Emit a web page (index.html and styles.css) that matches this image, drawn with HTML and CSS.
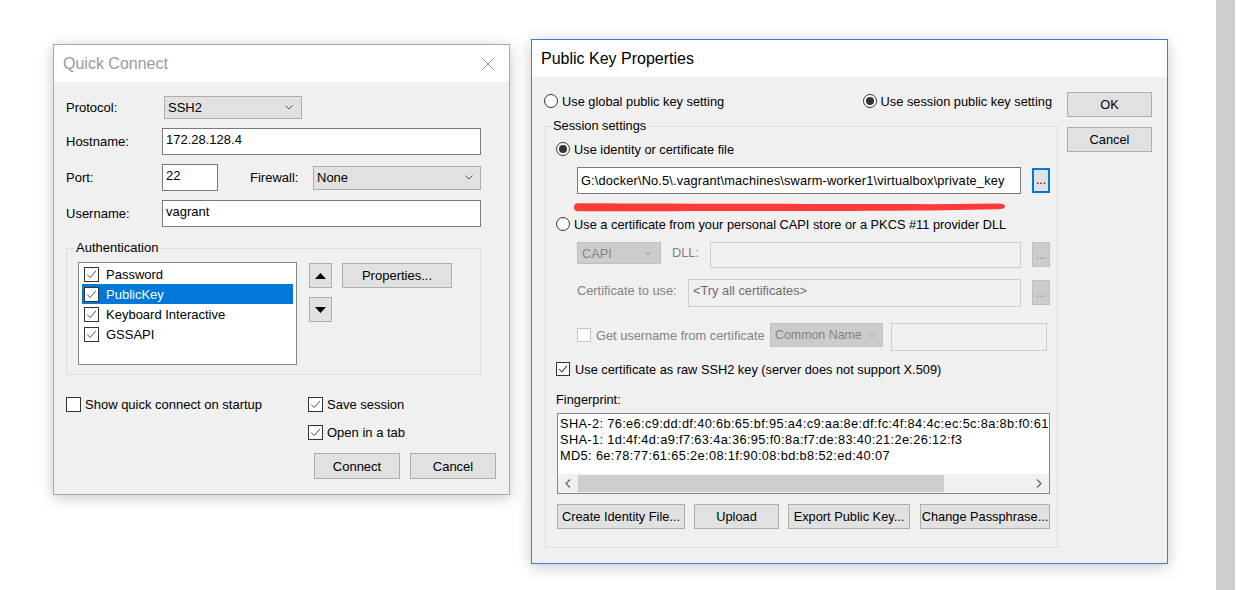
FILE: index.html
```html
<!DOCTYPE html>
<html>
<head>
<meta charset="utf-8">
<title>Quick Connect</title>
<link rel="stylesheet" href="styles.css">
</head>
<body>
<div class="page">
 <div class="desk">

  <div class="win qc">
   <div class="titlebar">
    <span class="title">Quick Connect</span>
    <svg class="close" width="12" height="12" viewBox="0 0 12 12"><path d="M0.5 0.5L11.5 11.5M11.5 0.5L0.5 11.5" stroke="#8c8c8c" stroke-width="1" fill="none"/></svg>
   </div>
   <div class="qc-body">
    <div class="row r-first">
     <span class="lbl">Protocol:</span>
     <div class="combo proto"><span class="ctext">SSH2</span><svg class="chev" width="8" height="5" viewBox="0 0 8 5"><path d="M0.5 0.5L4 4L7.5 0.5" stroke="#555" fill="none"/></svg></div>
    </div>
    <div class="row">
     <span class="lbl">Hostname:</span>
     <div class="edit host">172.28.128.4</div>
    </div>
    <div class="row">
     <span class="lbl">Port:</span>
     <div class="edit port">22</div>
     <span class="lbl-fw">Firewall:</span>
     <div class="combo fw"><span class="ctext">None</span><svg class="chev" width="8" height="5" viewBox="0 0 8 5"><path d="M0.5 0.5L4 4L7.5 0.5" stroke="#555" fill="none"/></svg></div>
    </div>
    <div class="row">
     <span class="lbl">Username:</span>
     <div class="edit host">vagrant</div>
    </div>

    <div class="group auth">
     <span class="legend">Authentication</span>
     <div class="auth-inner">
      <div class="listbox">
       <div class="item"><span class="cb on"><svg viewBox="0 0 15 15"><path d="M2.5 7.5L6 11L12.5 3.5" stroke="#444" stroke-width="1.1" fill="none"/></svg></span>Password</div>
       <div class="item sel"><span class="cb on"><svg viewBox="0 0 15 15"><path d="M2.5 7.5L6 11L12.5 3.5" stroke="#444" stroke-width="1.1" fill="none"/></svg></span>PublicKey</div>
       <div class="item"><span class="cb on"><svg viewBox="0 0 15 15"><path d="M2.5 7.5L6 11L12.5 3.5" stroke="#444" stroke-width="1.1" fill="none"/></svg></span>Keyboard Interactive</div>
       <div class="item"><span class="cb on"><svg viewBox="0 0 15 15"><path d="M2.5 7.5L6 11L12.5 3.5" stroke="#444" stroke-width="1.1" fill="none"/></svg></span>GSSAPI</div>
      </div>
      <div class="updown">
       <div class="btn arrow"><svg width="11" height="6" viewBox="0 0 11 6"><path d="M5.5 0L11 6H0Z" fill="#000"/></svg></div>
       <div class="btn arrow"><svg width="11" height="6" viewBox="0 0 11 6"><path d="M0 0H11L5.5 6Z" fill="#000"/></svg></div>
      </div>
      <div class="btn props">Properties...</div>
     </div>
    </div>

    <div class="qc-bottom">
     <div class="qc-left">
      <div class="cbrow"><span class="cb"></span><span class="cbtext">Show quick connect on startup</span></div>
     </div>
     <div class="qc-right">
      <div class="cbrow"><span class="cb on"><svg viewBox="0 0 15 15"><path d="M2.5 7.5L6 11L12.5 3.5" stroke="#444" stroke-width="1.1" fill="none"/></svg></span><span class="cbtext">Save session</span></div>
      <div class="cbrow second"><span class="cb on"><svg viewBox="0 0 15 15"><path d="M2.5 7.5L6 11L12.5 3.5" stroke="#444" stroke-width="1.1" fill="none"/></svg></span><span class="cbtext">Open in a tab</span></div>
      <div class="qc-buttons">
       <div class="btn qbtn">Connect</div>
       <div class="btn qbtn">Cancel</div>
      </div>
     </div>
    </div>
   </div>
  </div>

  <div class="win pkp">
   <div class="titlebar">
    <span class="title">Public Key Properties</span>
   </div>
   <div class="pkp-body">
    <div class="pkp-main">
     <div class="scope-row">
      <div class="opt"><span class="rb"></span><span>Use global public key setting</span></div>
      <div class="opt"><span class="rb on"></span><span>Use session public key setting</span></div>
     </div>

     <div class="group sess">
      <span class="legend">Session settings</span>

      <div class="opt"><span class="rb on"></span><span>Use identity or certificate file</span></div>

      <div class="indent file-row">
       <div class="edit path">G:\docker\No.5\.vagrant\machines\swarm-worker1\virtualbox\private_key</div>
       <div class="btn browse focus">...</div>
       <svg class="redline" width="434" height="10" viewBox="0 0 434 10"><path d="M4 1.2C120 1.6 260 2.2 356 2.2L424 1.4Q431 1.5 431 4.2Q431 7 424 7.2L356 8.4C260 9 120 9.2 4 9.2Q0 9 0 5.2Q0 1.3 4 1.2Z" fill="#fb3a3a"/></svg>
      </div>

      <div class="opt opt-capi"><span class="rb"></span><span>Use a certificate from your personal CAPI store or a PKCS #11 provider DLL</span></div>

      <div class="indent dll-row">
       <div class="combo dis capi"><span class="ctext">CAPI</span><svg class="chev" width="8" height="5" viewBox="0 0 8 5"><path d="M0.5 0.5L4 4L7.5 0.5" stroke="#9a9a9a" fill="none"/></svg></div>
       <span class="dlbl dll-lbl">DLL:</span>
       <div class="edit dis dll"></div>
       <div class="btn browse dis">...</div>
      </div>

      <div class="indent cert-row">
       <span class="dlbl cert-lbl">Certificate to use:</span>
       <div class="edit dis cert">&lt;Try all certificates&gt;</div>
       <div class="btn browse dis low">...</div>
      </div>

      <div class="indent user-row">
       <div class="user-chk"><span class="cb small dis"></span><span class="dlbl">Get username from certificate</span></div>
       <div class="combo dis cn"><span class="ctext cn-text">Common Name</span><svg class="chev" width="8" height="5" viewBox="0 0 8 5"><path d="M0.5 0.5L4 4L7.5 0.5" stroke="#9a9a9a" fill="none"/></svg></div>
       <div class="edit dis uname"></div>
      </div>

      <div class="opt opt-raw"><span class="cb small on"><svg viewBox="0 0 15 15"><path d="M2.5 7.5L6 11L12.5 3.5" stroke="#333" stroke-width="1.3" fill="none"/></svg></span><span>Use certificate as raw SSH2 key (server does not support X.509)</span></div>

      <div class="fp-label">Fingerprint:</div>
      <div class="fp">
       <div class="fp-text">
        <div class="fp-line">SHA-2: 76:e6:c9:dd:df:40:6b:65:bf:95:a4:c9:aa:8e:df:fc:4f:84:4c:ec:5c:8a:8b:f0:61</div>
        <div class="fp-line">SHA-1: 1d:4f:4d:a9:f7:63:4a:36:95:f0:8a:f7:de:83:40:21:2e:26:12:f3</div>
        <div class="fp-line">MD5: 6e:78:77:61:65:2e:08:1f:90:08:bd:b8:52:ed:40:07</div>
       </div>
       <div class="hscroll">
        <div class="sarrow"><svg width="6" height="9" viewBox="0 0 6 9"><path d="M5 0.5L1 4.5L5 8.5" stroke="#606060" stroke-width="1.2" fill="none"/></svg></div>
        <div class="thumb"></div>
        <div class="strack"></div>
        <div class="sarrow"><svg width="6" height="9" viewBox="0 0 6 9"><path d="M1 0.5L5 4.5L1 8.5" stroke="#606060" stroke-width="1.2" fill="none"/></svg></div>
       </div>
      </div>

      <div class="fp-buttons">
       <div class="btn b-create">Create Identity File...</div>
       <div class="btn b-upload">Upload</div>
       <div class="btn b-export">Export Public Key...</div>
       <div class="btn b-pass">Change Passphrase...</div>
      </div>
     </div>
    </div>
    <div class="pkp-side">
     <div class="btn side-btn">OK</div>
     <div class="btn side-btn">Cancel</div>
    </div>
   </div>
  </div>

 </div>
 <div class="vscroll"></div>
</div>
</body>
</html>
```

FILE: styles.css
```css
* { box-sizing: border-box; }
html, body { margin: 0; padding: 0; }
body {
  width: 1236px;
  height: 590px;
  overflow: hidden;
  background: #ffffff;
  font-family: "Liberation Sans", Arial, sans-serif;
  color: #000;
}
.page { display: flex; height: 590px; }
.desk { position: relative; flex: 1; }
.vscroll { width: 19px; background: #cdcdcd; margin-right: 1px; }

/* windows */
.win {
  position: absolute;
  background: #f0f0f0;
  display: flex;
  flex-direction: column;
  box-shadow: 0 3px 14px rgba(0, 0, 0, 0.22);
}
.qc {
  left: 53px; top: 44px; width: 457px; height: 451px;
  border: 1px solid #a8a8a8;
  font-size: 13px;
}
.pkp {
  left: 531px; top: 39px; width: 637px; height: 525px;
  border: 1px solid #2a86d6;
  font-size: 12.8px;
}
.titlebar {
  flex: none;
  height: 37px;
  background: #fff;
  display: flex;
  align-items: center;
  padding-left: 9px;
}
.title { font-size: 16px; }
.qc .title { color: #9a9a9a; }
.close { margin-left: auto; margin-right: 15px; }

/* generic controls */
.btn {
  background: #e1e1e1;
  border: 1px solid #adadad;
  display: flex;
  align-items: center;
  justify-content: center;
  flex: none;
  white-space: nowrap;
}
.combo {
  background: #e1e1e1;
  border: 1px solid #adadad;
  display: flex;
  align-items: center;
  flex: none;
  white-space: nowrap;
}
.combo .chev { margin-left: auto; flex: none; }
.edit {
  background: #fff;
  border: 1px solid #7a7a7a;
  flex: none;
  white-space: nowrap;
  overflow: hidden;
}
.cb {
  width: 15px; height: 15px;
  border: 1px solid #333;
  background: #fff;
  flex: none;
  display: flex;
}
.cb svg { width: 13px; height: 13px; }
.cb.small { width: 14px; height: 14px; }
.cb.small svg { width: 12px; height: 12px; }
.cb.dis { border-color: #c4c4c4; }
.rb {
  width: 14px; height: 14px;
  border: 1px solid #333;
  border-radius: 50%;
  background: #fff;
  flex: none;
  display: flex;
  align-items: center;
  justify-content: center;
}
.rb.on::after {
  content: "";
  width: 8px; height: 8px;
  border-radius: 50%;
  background: #333;
}
.group {
  position: relative;
  border: 1px solid #dcdcdc;
}
.legend {
  position: absolute;
  top: -9px; left: 6px;
  padding: 0 1px;
  line-height: 16px;
  background: #f0f0f0;
  white-space: nowrap;
}

/* Quick Connect body */
.qc-body { padding: 14px 13px 0 12px; }
.row { display: flex; align-items: center; height: 27px; margin-bottom: 9px; }
.row.r-first { height: 23px; }
.lbl { width: 96px; flex: none; }
.proto { width: 138px; height: 23px; margin-left: 2px; padding: 0 8px 0 3px; }
.edit.host { width: 319px; height: 27px; padding: 3px 0 0 3px; line-height: 16px; }
.edit.port { width: 56px; height: 27px; padding: 3px 0 0 3px; line-height: 16px; }
.lbl-fw { width: 63px; margin-left: 32px; flex: none; }
.fw { width: 168px; height: 24px; padding: 0 7px 0 3px; }

.group.auth { width: 415px; height: 127px; margin-top: 21px; padding: 13px 0 0 11px; }
.auth .legend { left: 8px; }
.auth-inner { display: flex; align-items: flex-start; }
.listbox {
  width: 219px; height: 103px;
  border: 1px solid #828790;
  background: #fff;
  padding: 1px 3px;
}
.item { height: 20px; display: flex; align-items: center; padding-left: 2px; white-space: nowrap; }
.item .cb { margin-right: 7px; }
.item.sel { background: #0078d7; color: #fff; }
.updown { display: flex; flex-direction: column; gap: 9px; margin-left: 12px; margin-top: 1px; }
.btn.arrow { width: 23px; height: 25px; }
.btn.props { width: 110px; height: 25px; margin-left: 10px; margin-top: 1px; }

.qc-bottom { display: flex; margin-top: 22px; }
.qc-left { width: 242px; flex: none; }
.qc-right { flex: 1; display: flex; flex-direction: column; }
.cbrow { display: flex; align-items: center; height: 15px; white-space: nowrap; }
.cbrow .cb { margin-right: 4px; }
.cbrow.second { margin-top: 13px; }
.qc-buttons { display: flex; justify-content: flex-end; gap: 10px; margin-top: 13px; }
.btn.qbtn { width: 86px; height: 26px; }

/* Public Key Properties body */
.pkp-body { display: flex; padding: 0 15px 0 13px; gap: 9px; flex: 1; }
.pkp-main { width: 513px; flex: none; padding-top: 16px; }
.scope-row {
  height: 16px;
  display: flex;
  justify-content: space-between;
  align-items: center;
  margin-left: -1px;
  padding-right: 6px;
}
.opt { display: flex; align-items: center; height: 16px; gap: 4px; white-space: nowrap; }
.pkp-side { width: 85px; flex: none; padding-top: 15px; display: flex; flex-direction: column; gap: 10px; }
.btn.side-btn { height: 25px; }

.group.sess { margin-top: 17px; height: 422px; padding: 14px 7px 0 10px; }
.indent { margin-left: 21px; display: flex; align-items: flex-start; position: relative; }
.file-row { margin-top: 10px; height: 27px; }
.edit.path { width: 444px; height: 27px; padding-left: 3px; line-height: 25px; letter-spacing: 0.16px; }
.btn.browse { width: 18px; height: 25px; margin-left: 11px; align-items: flex-end; padding-bottom: 6px; line-height: 10px; font-size: 12px; }
.btn.browse.focus { border: 2px solid #0078d7; margin-top: 1px; }
.btn.browse.dis { background: #cccccc; border-color: #bfbfbf; color: #8a8a8a; }
.btn.browse.low { margin-top: 1px; }
.redline { position: absolute; left: -3px; top: 35px; }

.opt-capi { margin-top: 22px; }
.dll-row { margin-top: 10px; height: 26px; }
.combo.dis { background: #cccccc; border-color: #bfbfbf; color: #838383; }
.capi { width: 84px; height: 22px; padding: 0 8px 0 4px; }
.dlbl { color: #838383; white-space: nowrap; }
.dll-lbl { width: 38px; margin-left: 11px; line-height: 22px; flex: none; }
.edit.dis { background: #f0f0f0; border-color: #cccccc; color: #6d6d6d; }
.edit.dll { width: 311px; height: 26px; }

.cert-row { margin-top: 11px; height: 28px; }
.cert-lbl { width: 111px; line-height: 24px; flex: none; }
.edit.cert { width: 333px; height: 28px; padding: 3px 0 0 4px; line-height: 16px; }

.user-row { margin-top: 16px; height: 28px; }
.user-chk { width: 193px; flex: none; display: flex; align-items: center; height: 24px; gap: 5px; }
.cn { width: 113px; height: 24px; padding: 0 6px 0 4px; color: #6d6d6d; }
.cn-text { font-size: 12.4px; }
.edit.uname { width: 156px; height: 28px; margin-left: 8px; }

.opt-raw { margin-top: 10px; gap: 5px; }
.fp-label { margin-top: 15px; line-height: 16px; }
.fp {
  margin-top: 5px; margin-left: 1px;
  width: 493px; height: 81px;
  border: 1px solid #828790;
  background: #fff;
  display: flex; flex-direction: column;
}
.fp-text { flex: 1; overflow: hidden; padding: 2px 0 0 2px; }
.fp-line { line-height: 16px; white-space: nowrap; letter-spacing: 0.35px; }
.hscroll { height: 19px; background: #f0f0f0; display: flex; align-items: center; }
.sarrow { width: 20px; height: 19px; display: flex; align-items: center; justify-content: center; flex: none; }
.thumb { width: 366px; height: 17px; background: #cdcdcd; flex: none; }
.strack { flex: 1; }

.fp-buttons { display: flex; margin-top: 10px; margin-left: 1px; height: 25px; }
.fp-buttons .btn { height: 25px; }
.b-create { width: 128px; }
.b-upload { width: 85px; margin-left: 9px; }
.b-export { width: 122px; margin-left: 9px; }
.b-pass { width: 130px; margin-left: 10px; }
```
